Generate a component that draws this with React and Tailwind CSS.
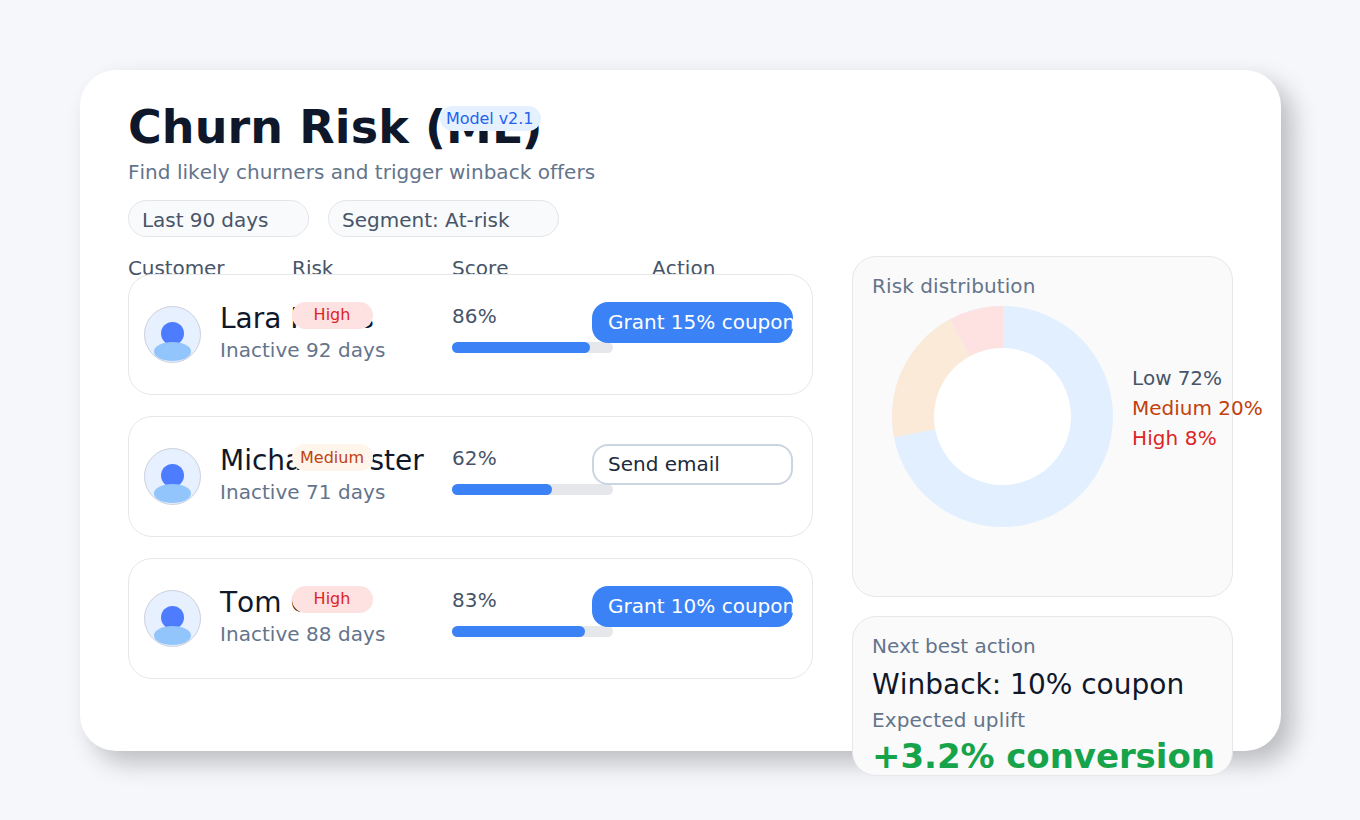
const rows = [
  { name: "Lara Harris", idle: "Inactive 92 days", risk: "High", score: 86, bar: 138, action: "Grant 15% coupon", primary: true },
  { name: "Michael Foster", idle: "Inactive 71 days", risk: "Medium", score: 62, bar: 100, action: "Send email", primary: false },
  { name: "Tom Chen", idle: "Inactive 88 days", risk: "High", score: 83, bar: 133, action: "Grant 10% coupon", primary: true },
];

function Avatar() {
  return (
    <svg className="mt-[31px] h-[57px] w-[57px] shrink-0" viewBox="0 0 57 57">
      <circle cx="28.5" cy="28.5" r="28" fill="#e6f0ff" stroke="#cbd0dc" />
      <circle cx="28.5" cy="27.5" r="11.5" fill="#4d7cfe" />
      <ellipse cx="28.5" cy="45.5" rx="18.5" ry="9.5" fill="#93c5fd" />
    </svg>
  );
}

function Row({ row }) {
  const badge = row.risk === "High" ? "bg-[#fee2e2] text-[#dc2626] leading-[25px]" : "bg-[#fff5eb] text-[#c2410c] leading-[27px]";
  const button = row.primary
    ? "bg-[#3b82f6] text-white pb-0.5"
    : "border-2 border-[#cbd5e1] bg-white text-[#1e293b] pb-0.5";
  return (
    <div className="relative flex h-[121px] w-[685px] rounded-[24px] border border-[#e5e7eb] bg-white pl-[15px]">
      <Avatar />
      <div className="ml-[19px] w-[232px] shrink-0 whitespace-nowrap">
        <div className="mt-[27px] text-[28px] leading-[33px] text-[#0f172a]">{row.name}</div>
        <div className="mt-[3px] text-[20px] leading-6 tracking-[0.04px] text-[#64748b]">{row.idle}</div>
      </div>
      <div className="w-[161px] shrink-0">
        <div className="mt-[29px] text-[20px] leading-6 tracking-[0.1px] text-[#475569]">{row.score}%</div>
        <div className="mt-[14px] h-[11px] rounded-full bg-[#e5e7eb]">
          <div className="h-[11px] rounded-full bg-[#3b82f6]" style={{ width: row.bar }} />
        </div>
      </div>
      <span className={`absolute left-[163px] top-[27px] h-[27px] w-[81px] rounded-full pr-px text-center text-[16px] ${badge}`}>
        {row.risk}
      </span>
      <button className={`absolute left-[463px] top-[27px] flex h-[41px] w-[201px] items-center overflow-hidden whitespace-nowrap rounded-[16px] text-left text-[20px] leading-6 ${button}`}>
        <span className={row.primary ? "pl-4" : "pl-3.5"}>{row.action}</span>
      </button>
    </div>
  );
}

function Donut() {
  return (
    <svg className="h-[221px] w-[221px] shrink-0" viewBox="-110.5 -110.5 221 221">
      <circle r="110.5" fill="#e1efff" />
      <path d="M0 0 L-108.54 20.7 A110.5 110.5 0 0 1 -52.5 -97.23 Z" fill="#fbead8" />
      <path d="M0.5 0 L-52.5 -97.23 A110.5 110.5 0 0 1 0.5 -110.5 Z" fill="#fee2e2" />
      <circle r="68.5" fill="#fff" />
    </svg>
  );
}

export default function App() {
  return (
    <div className="h-[820px] w-[1360px] overflow-hidden bg-[#f5f7fb] pl-20 pt-[70px] font-['DejaVu_Sans',sans-serif] [font-kerning:none] [font-variant-ligatures:none]">
      <main className="h-[681px] w-[1201px] rounded-[36px] bg-white pl-12 pt-8 shadow-[12px_12px_24px_rgba(0,0,0,0.235)]">
        <header className="h-[135px]">
          <div className="relative h-[50px]">
            <h1 className="whitespace-nowrap text-[46px] font-bold leading-[50px] tracking-[0.1px] text-[#0f172a]">Churn Risk (ML)</h1>
            <span className="absolute left-[312px] top-[4px] h-[25px] w-[101px] whitespace-nowrap rounded-full bg-[#e6f1ff] pl-[6px] text-[16px] leading-[25px] tracking-[-0.08px] text-[#2563eb]">Model v2.1</span>
          </div>
          <p className="mt-[8px] text-[20px] leading-6 tracking-[0.03px] text-[#64748b]">Find likely churners and trigger winback offers</p>
          <div className="mt-[16px] flex gap-[19px] text-[20px] leading-[37px] text-[#475569]">
            <div className="h-[37px] w-[181px] rounded-full border border-[#e2e5ea] bg-[#f9fafc] pl-[13px] pt-px tracking-[-0.06px]">Last 90 days</div>
            <div className="h-[37px] w-[231px] rounded-full border border-[#e2e5ea] bg-[#f9fafc] pl-[13px] pt-px">Segment: At-risk</div>
          </div>
        </header>
        <div className="flex gap-[39px]">
          <section className="w-[685px] pt-[19px]">
            <div className="flex h-[18px] text-[20px] leading-6 text-[#475569]">
              <span className="w-[164px] tracking-[-0.1px]">Customer</span>
              <span className="w-[160px]">Risk</span>
              <span className="w-[200px]">Score</span>
              <span className="tracking-[0.1px]">Action</span>
            </div>
            <div className="flex flex-col gap-[21px]">
              {rows.map((row) => <Row key={row.name} row={row} />)}
            </div>
          </section>
          <aside className="mt-[19px] flex w-[381px] flex-col gap-[19px]">
            <section className="h-[341px] rounded-[24px] border border-[#e5e7eb] bg-[#fafafa] pl-[19px] pt-[17px]">
              <h2 className="text-[20px] leading-6 tracking-[0.1px] text-[#64748b]">Risk distribution</h2>
              <div className="ml-5 mt-[8px] flex gap-[19px]">
                <Donut />
                <div className="whitespace-nowrap pt-[57px] text-[20px] leading-[30px]">
                  <div className="tracking-[-0.1px] text-[#475569]">Low 72%</div>
                  <div className="text-[#c2410c]">Medium 20%</div>
                  <div className="tracking-[0.1px] text-[#dc2626]">High 8%</div>
                </div>
              </div>
            </section>
            <section className="h-[160px] whitespace-nowrap rounded-[24px] border border-[#e5e7eb] bg-[#fafafa] pl-[19px] pt-[17px]">
              <h2 className="text-[20px] leading-6 tracking-[-0.05px] text-[#64748b]">Next best action</h2>
              <div className="mt-[10px] text-[28px] leading-[33px] text-[#0f172a]">Winback: 10% coupon</div>
              <div className="mt-[7px] text-[20px] leading-6 tracking-[0.15px] text-[#64748b]">Expected uplift</div>
              <div className="mt-[4px] text-[34px] font-bold leading-[40px] tracking-[-0.06px] text-[#16a34a]">+3.2% conversion</div>
            </section>
          </aside>
        </div>
      </main>
    </div>
  );
}
